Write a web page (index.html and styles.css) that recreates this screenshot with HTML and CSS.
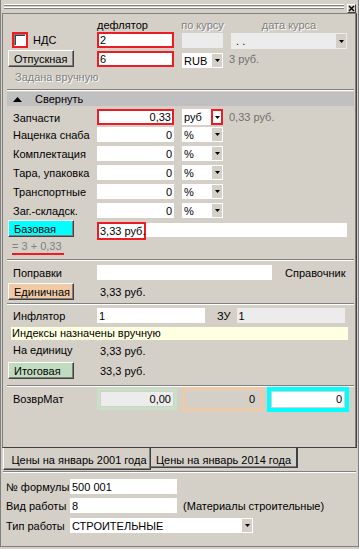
FILE: index.html
```html
<!DOCTYPE html>
<html lang="ru">
<head>
    <meta charset="UTF-8">
    <title>Цена материала</title>
    <link rel="stylesheet" href="styles.css">
</head>
<body>
    <div class="window">
        <div class="caption">
            <div class="grip"></div>
            <div class="close-btn">
                <svg width="7" height="7" viewBox="0 0 7 7"><path d="M1 1 L6 6 M6 1 L1 6" stroke="#000" stroke-width="1.4" fill="none"/></svg>
            </div>
        </div>

        <div class="page">
            <div class="row hdr">
                <div class="lab"></div>
                <div class="c1">дефлятор</div>
                <div class="c2 dis">по курсу</div>
                <div class="c3 dis">дата курса</div>
            </div>

            <div class="row r1">
                <div class="lab chk-cell">
                    <span class="chk-frame"><span class="chk"></span></span>
                    <span class="chk-text">НДС</span>
                </div>
                <div class="inp red w77">2</div>
                <div class="inp gray w41 ml8 mt1"></div>
                <div class="combo gray w116 ml8 mt1">
                    <span class="val">&nbsp;. .</span>
                    <span class="arrow"><svg width="5" height="3"><polygon points="0,0 5,0 2.5,3" fill="#000"/></svg></span>
                </div>
            </div>

            <div class="row r2">
                <div class="lab"><button class="btn">Отпускная</button></div>
                <div class="inp red w77 h16 end">6</div>
                <div class="combo w41 ml8 h16 end">
                    <span class="val">RUB</span>
                    <span class="arrow"><svg width="5" height="3"><polygon points="0,0 5,0 2.5,3" fill="#000"/></svg></span>
                </div>
                <div class="note-val">3 руб.</div>
            </div>

            <div class="note dis">Задана вручную</div>
            <div class="sep sep-a"></div>

            <div class="bar">
                <svg class="bar-tri" width="9" height="5"><polygon points="0,5 4.5,0 9,5" fill="#000"/></svg>
                <span>Свернуть</span>
            </div>

            <div class="row frow first">
                <div class="lab">Запчасти</div>
                <div class="inp red w77 num">0,33</div>
                <div class="combo w41 ml8">
                    <span class="val">руб</span>
                    <span class="arrow red-arrow"><svg width="5" height="3"><polygon points="0,0 5,0 2.5,3" fill="#000"/></svg></span>
                </div>
                <div class="note-val">0,33 руб.</div>
            </div>
            <div class="row frow second">
                <div class="lab">Наценка снаба</div>
                <div class="inp w77 num">0</div>
                <div class="combo w41 ml8">
                    <span class="val">%</span>
                    <span class="arrow"><svg width="5" height="3"><polygon points="0,0 5,0 2.5,3" fill="#000"/></svg></span>
                </div>
            </div>
            <div class="row frow">
                <div class="lab">Комплектация</div>
                <div class="inp w77 num">0</div>
                <div class="combo w41 ml8">
                    <span class="val">%</span>
                    <span class="arrow"><svg width="5" height="3"><polygon points="0,0 5,0 2.5,3" fill="#000"/></svg></span>
                </div>
            </div>
            <div class="row frow">
                <div class="lab">Тара, упаковка</div>
                <div class="inp w77 num">0</div>
                <div class="combo w41 ml8">
                    <span class="val">%</span>
                    <span class="arrow"><svg width="5" height="3"><polygon points="0,0 5,0 2.5,3" fill="#000"/></svg></span>
                </div>
            </div>
            <div class="row frow">
                <div class="lab">Транспортные</div>
                <div class="inp w77 num">0</div>
                <div class="combo w41 ml8">
                    <span class="val">%</span>
                    <span class="arrow"><svg width="5" height="3"><polygon points="0,0 5,0 2.5,3" fill="#000"/></svg></span>
                </div>
            </div>
            <div class="row frow">
                <div class="lab">Заг.-складск.</div>
                <div class="inp w77 num">0</div>
                <div class="combo w41 ml8">
                    <span class="val">%</span>
                    <span class="arrow"><svg width="5" height="3"><polygon points="0,0 5,0 2.5,3" fill="#000"/></svg></span>
                </div>
            </div>

            <div class="row base-row">
                <div class="lab"><button class="btn btn-cyan">Базовая</button></div>
                <div class="base-val">3,33 руб.</div>
                <div class="base-fill"></div>
            </div>
            <div class="formula"><span>= 3 + 0,33</span></div>
            <div class="sep sep-b"></div>

            <div class="row prow">
                <div class="lab">Поправки</div>
                <div class="inp w175"></div>
                <div class="ref">Справочник</div>
            </div>
            <div class="row btn-row unit-row">
                <div class="lab"><button class="btn btn-peach">Единичная</button></div>
                <div class="sum">3,33 руб.</div>
            </div>
            <div class="sep sep-c"></div>

            <div class="row prow infl">
                <div class="lab">Инфлятор</div>
                <div class="inp w108">1</div>
                <div class="zu">ЗУ</div>
                <div class="inp gray w108 ml6">1</div>
            </div>
            <div class="hint">Индексы назначены вручную</div>
            <div class="row line-row">
                <div class="lab">На единицу</div>
                <div class="sum">3,33 руб.</div>
            </div>
            <div class="row btn-row total-row">
                <div class="lab"><button class="btn btn-green">Итоговая</button></div>
                <div class="sum">33,3 руб.</div>
            </div>
            <div class="sep sep-d"></div>

            <div class="row ret-row">
                <div class="lab">ВозврМат</div>
                <div class="vbox vbox-green"><div class="vin">0,00</div></div>
                <div class="vbox vbox-peach"><div class="vin">0</div></div>
                <div class="vbox vbox-cyan"><div class="vin">0</div></div>
            </div>
        </div>

        <div class="tabs">
            <div class="tab active">Цены на январь 2001 года</div>
            <div class="tab">Цены на январь 2014 года</div>
        </div>
        <div class="sep tab-sep"></div>

        <div class="bottom-form">
            <div class="row brow b1">
                <div class="blab">№ формулы</div>
                <div class="inp w107">500 001</div>
            </div>
            <div class="row brow b2">
                <div class="blab">Вид работы</div>
                <div class="inp w107">8</div>
                <div class="kind">(Материалы строительные)</div>
            </div>
            <div class="row brow b3">
                <div class="blab">Тип работы</div>
                <div class="combo w183">
                    <span class="val">СТРОИТЕЛЬНЫЕ</span>
                    <span class="arrow"><svg width="5" height="3"><polygon points="0,0 5,0 2.5,3" fill="#000"/></svg></span>
                </div>
            </div>
        </div>
    </div>
</body>
</html>
```

FILE: styles.css
```css
body {
    margin: 0;
    background-color: #d4d0c8;
    font-family: 'Liberation Sans', Arial, sans-serif;
    font-size: 11px;
    color: #000;
}

.window {
    width: 359px;
    height: 547px;
    box-sizing: border-box;
    border-left: 1px solid #808080;
    border-right: 1px solid #808080;
    border-bottom: 1px solid #808080;
}

/* caption with grip lines */
.caption {
    height: 13px;
    display: flex;
    align-items: flex-start;
}

.grip {
    margin: 4px 0 0 3px;
    width: 340px;
    height: 6px;
    background: linear-gradient(to bottom, #fff 0 1px, #808080 1px 2px, transparent 2px 3px, #fff 3px 4px, #808080 4px 5px, transparent 5px);
}

.close-btn {
    margin: 4px 0 0 3px;
    width: 9px;
    height: 9px;
    box-sizing: border-box;
    border: 1px solid;
    border-color: #fff #404040 #404040 #fff;
    display: flex;
    align-items: center;
    justify-content: center;
}

.close-btn svg {
    display: block;
}

/* main page */
.page {
    margin-left: 1px;
    width: 355px;
    height: 435px;
    box-sizing: border-box;
    border: 1px solid;
    border-color: #808080 #404040 #404040 #808080;
    box-shadow: inset -1px 0 0 #808080;
    padding: 0 2px 0 4px;
}

.row {
    display: flex;
    align-items: center;
    white-space: nowrap;
}

.lab {
    width: 90px;
    flex: none;
    padding-left: 6px;
    box-sizing: border-box;
    line-height: 13px;
}

.dis {
    color: #808080;
    text-shadow: 1px 1px 0 #fff;
}

.hdr {
    margin-top: 5px;
    height: 13px;
    line-height: 13px;
    align-items: flex-start;
}

.hdr .c1 {
    width: 77px;
}

.hdr .c2 {
    margin-left: 8px;
    width: 41px;
    display: flex;
    justify-content: center;
}

.hdr .c3 {
    margin-left: 8px;
    width: 116px;
    text-align: center;
}

/* inputs */
.inp {
    height: 15px;
    box-sizing: border-box;
    background-color: #fff;
    padding: 0 2px;
    display: flex;
    align-items: center;
    flex: none;
    overflow: hidden;
}

.inp.red {
    border: 2px solid #ed1c24;
    padding: 0 1px;
    height: 16px;
}

.inp.num {
    justify-content: flex-end;
}

.inp.gray {
    background-color: #ececec;
}

.w41 { width: 41px; }
.w77 { width: 77px; }
.w107 { width: 107px; }
.w108 { width: 108px; }
.w116 { width: 116px; }
.w175 { width: 175px; }
.w183 { width: 183px; }
.ml6 { margin-left: 6px; }
.ml8 { margin-left: 8px; }
.mt1 { margin-top: 1px; }
.h16 { height: 16px; }

/* combo boxes */
.combo {
    height: 15px;
    box-sizing: border-box;
    background-color: #fff;
    padding: 1px 1px 1px 2px;
    display: flex;
    flex: none;
}

.combo.gray {
    background-color: #ececec;
    height: 16px;
}

.combo .val {
    flex: 1;
    display: flex;
    align-items: center;
    overflow: hidden;
}

.combo .arrow {
    width: 10px;
    background-color: #d4d0c8;
    display: flex;
    align-items: center;
    justify-content: center;
}

.combo .arrow svg {
    display: block;
}

.combo .red-arrow {
    width: 12px;
    margin: -1px -1px -1px 0;
    border: 2px solid #ed1c24;
    box-sizing: border-box;
    background-color: #fff;
}

.note-val {
    margin-left: 6px;
    color: #707070;
}

/* checkbox */
.r1 {
    height: 16px;
    align-items: flex-start;
}

.chk-cell {
    display: flex;
    align-items: center;
    padding-left: 5px;
    height: 16px;
}

.chk-frame {
    width: 16px;
    height: 16px;
    box-sizing: border-box;
    border: 2px solid #ed1c24;
    display: flex;
}

.chk {
    width: 12px;
    height: 12px;
    box-sizing: border-box;
    border: 1px solid;
    border-color: #808080 #fff #fff #808080;
    box-shadow: inset 1px 1px 0 #404040;
    background-color: #fff;
}

.chk-text {
    margin-left: 5px;
}

.r2 {
    margin-top: 2px;
    height: 17px;
}

.end {
    align-self: flex-end;
}

.r2 .combo {
    align-self: flex-end;
    margin-bottom: -1px;
}

/* buttons */
.btn {
    display: block;
    margin-left: -5px;
    width: 66px;
    height: 17px;
    box-sizing: border-box;
    padding: 0 0 0 5px;
    text-align: left;
    font-family: inherit;
    font-size: 11px;
    color: #000;
    background-color: #d4d0c8;
    border: 1px solid;
    border-color: #fff #404040 #404040 #fff;
    box-shadow: inset -1px -1px 0 #808080;
}

.btn-cyan { background-color: #00ffff; }
.btn-peach { background-color: #f0caa6; }
.btn-green { background-color: #c0dcc0; }

.note {
    margin-top: 4px;
    height: 13px;
    line-height: 13px;
    padding-left: 8px;
}

.sep {
    height: 0;
    border-top: 1px solid #808080;
    border-bottom: 1px solid #fff;
}

.sep-a { margin-top: 5px; }
.sep-b { margin-top: 4px; }
.sep-c { margin-top: 3px; }
.sep-d { margin-top: 6px; }

/* collapse bar */
.bar {
    margin-top: 1px;
    height: 14px;
    background-color: #c0c0c0;
    display: flex;
    align-items: center;
}

.bar-tri {
    margin-left: 6px;
    display: block;
}

.bar span {
    margin-left: 13px;
}

.frow {
    height: 15px;
    margin-top: 4px;
}

.frow .lab {
    padding-top: 2px;
}

.frow.first {
    margin-top: 3px;
    height: 16px;
}

.frow.first .combo {
    height: 16px;
}

.frow.second {
    margin-top: 2px;
}

/* base price */
.base-row {
    margin-top: 2px;
    height: 20px;
    align-items: flex-start;
}

.base-val {
    margin-top: 2px;
    width: 49px;
    height: 18px;
    box-sizing: border-box;
    border: 2px solid #ed1c24;
    background-color: #fff;
    padding-left: 1px;
    line-height: 14px;
}

.base-fill {
    margin-top: 3px;
    width: 201px;
    height: 14px;
    background-color: #fff;
}

.formula {
    height: 15px;
    padding-left: 5px;
}

.formula span {
    display: inline-block;
    line-height: 13px;
    color: #808080;
    border-bottom: 2px solid #ed1c24;
    padding-right: 2px;
}

.prow {
    margin-top: 4px;
    height: 15px;
}

.prow .lab {
    padding-top: 1px;
}

.ref {
    margin-left: 13px;
}

.btn-row {
    height: 17px;
}

.unit-row {
    margin-top: 3px;
}

.total-row {
    margin-top: 5px;
}

.sum {
    padding-left: 3px;
}

.infl {
    margin-top: 3px;
}

.zu {
    margin-left: 12px;
}

.hint {
    margin: 4px 0 0 4px;
    width: 337px;
    height: 13px;
    line-height: 13px;
    padding-left: 1px;
    box-sizing: border-box;
    background-color: #ffffe1;
}

.line-row {
    margin-top: 4px;
    height: 13px;
}

/* returnable materials */
.ret-row {
    height: 24px;
}

.vbox {
    box-sizing: border-box;
    border: 3px solid;
    padding: 1px;
    display: flex;
    flex: none;
}

.vin {
    flex: 1;
    display: flex;
    align-items: center;
    justify-content: flex-end;
    padding-right: 2px;
}

.vbox-green {
    width: 80px;
    height: 22px;
    border-color: #c8e0c8;
}

.vbox-green .vin {
    background-color: #ececec;
}

.vbox-peach {
    margin-left: 5px;
    width: 81px;
    height: 24px;
    border-color: #f0caa6;
}

.vbox-peach .vin {
    padding-right: 4px;
}

.vbox-cyan {
    margin-left: 4px;
    width: 82px;
    height: 25px;
    border: 4px solid #00ffff;
    padding: 1px;
}

.vbox-cyan .vin {
    background-color: #fff;
}

/* bottom tabs */
.tabs {
    display: flex;
    height: 23px;
    padding-left: 2px;
    align-items: flex-start;
}

.tab {
    box-sizing: border-box;
    padding-top: 6px;
    line-height: 13px;
    text-align: center;
    white-space: nowrap;
    border: 1px solid;
    border-top: none;
    border-color: #fff #404040 #404040 #fff;
}

.tab.active {
    width: 148px;
    height: 22px;
    padding-left: 4px;
    box-shadow: inset -1px -1px 0 #808080;
}

.tab + .tab {
    width: 147px;
    height: 20px;
    padding-top: 6px;
    border-left: none;
    border-right-width: 2px;
    box-shadow: inset 0 -1px 0 #808080;
}

.tab-sep {
    margin-left: 2px;
    width: 353px;
}

.bottom-form {
    padding-left: 5px;
}

.brow {
    height: 15px;
}

.b1 { margin-top: 6px; }
.b2 { margin-top: 4px; }
.b3 { margin-top: 5px; }

.blab {
    width: 64px;
    flex: none;
}

.kind {
    margin-left: 6px;
}
```
